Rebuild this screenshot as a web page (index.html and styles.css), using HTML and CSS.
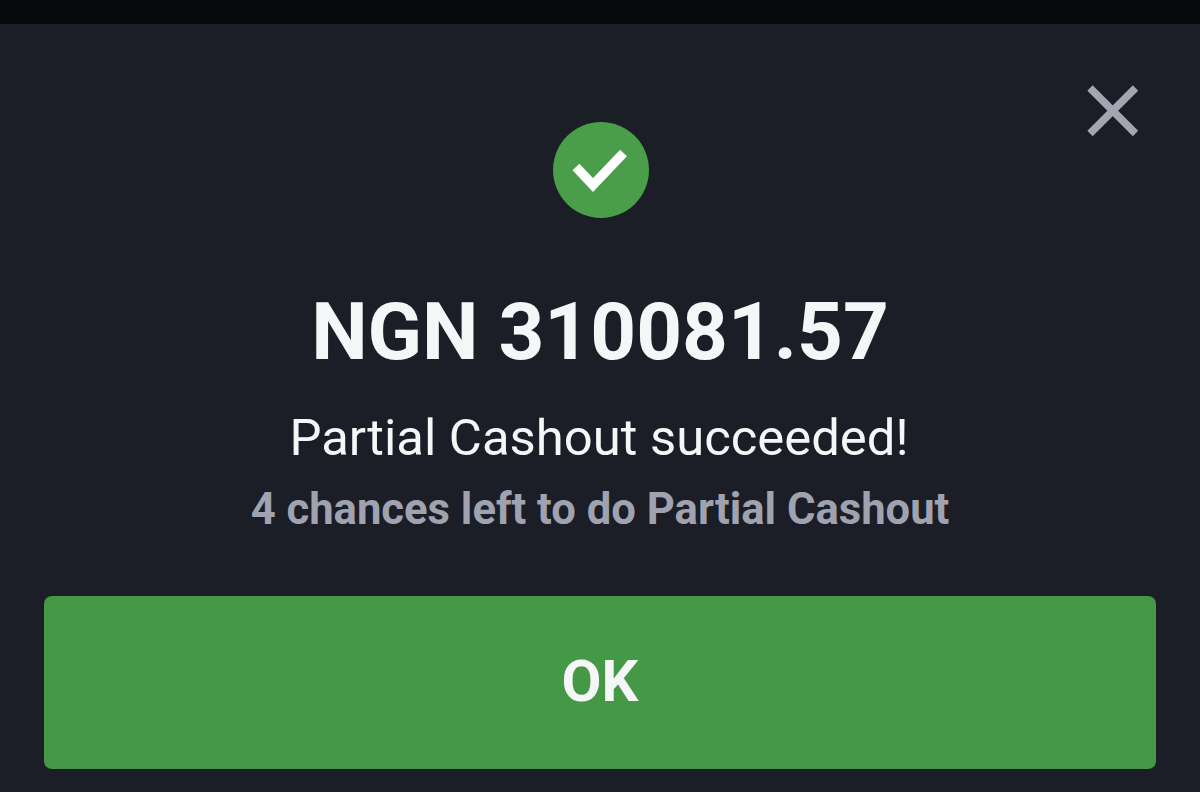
FILE: index.html
```html
<!DOCTYPE html>
<html lang="en">
<head>
  <meta charset="UTF-8" />
  <title>Partial Cashout</title>
  <link rel="stylesheet" href="styles.css">
</head>
<body>

<div class="topbar"></div>

<main class="modal">
  <button class="close" type="button" aria-label="Close">
    <svg width="52" height="52" viewBox="0 0 52 52"><path d="M3 3L48.5 48.5M48.5 3L3 48.5" /></svg>
  </button>

  <div class="tick">
    <svg width="96" height="96" viewBox="0 0 96 96"><path d="M23 45L40 63L70.5 31" /></svg>
  </div>

  <h1 class="amount">NGN 310081.57</h1>
  <p class="status">Partial Cashout succeeded!</p>
  <p class="chances">4 chances left to do Partial Cashout</p>

  <button class="ok" type="button">OK</button>
</main>

</body>
</html>
```

FILE: styles.css
```css
:root {
  --bg:#1b1e26; --top:#08090c; --green:#459845; --grey:#a0a3af; --white:#f5f6f8;
}
html,body{height:100%}
body{margin:0;background:var(--bg);color:var(--white);font-family:Roboto,sans-serif;
     display:flex;flex-direction:column;overflow:hidden}
.topbar{height:24px;background:var(--top);flex:none}
.modal{position:relative;flex:1;display:flex;flex-direction:column;align-items:center;
       padding:98px 44px 0}
.close{position:absolute;top:61px;right:61px;padding:0;border:none;background:none;
       line-height:0;cursor:pointer}
.close path{stroke:#a3a6b2;stroke-width:7.5;stroke-linecap:butt;fill:none}
.tick{width:96px;height:96px;border-radius:50%;background:#4a9e4a;line-height:0;margin-left:2px}
.tick path{stroke:#fff;stroke-width:9.5;fill:none}
.amount{margin:68px 0 0;font-size:80px;line-height:92px;font-weight:700}
.status{margin:31px 2px 0 0;font-size:50.8px;line-height:58px;font-weight:400}
.chances{margin:19px 0 0;font-size:43.6px;line-height:48px;font-weight:700;color:var(--grey)}
.ok{margin-top:62px;width:100%;height:173px;flex:none;border:none;border-radius:8px;padding:0 0 4px;
    background:var(--green);color:var(--white);font-family:inherit;font-size:58px;font-weight:700;cursor:pointer}
```
